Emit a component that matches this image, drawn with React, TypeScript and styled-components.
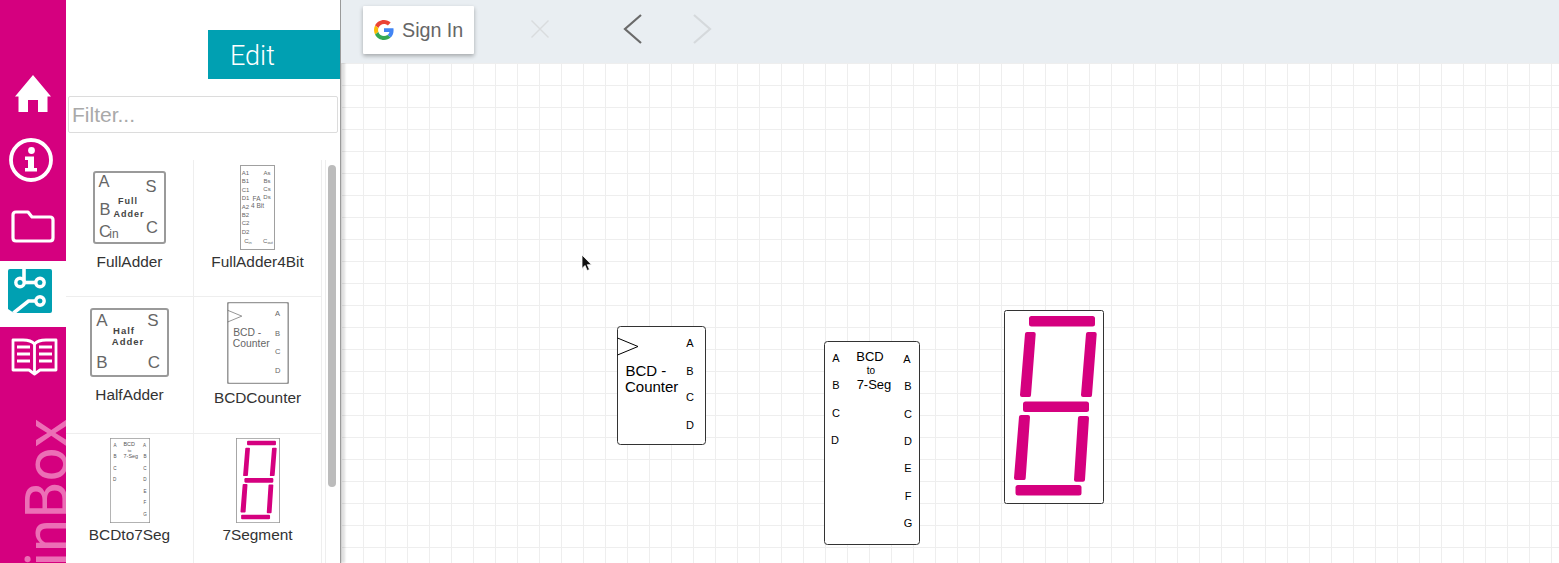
import React from "react";
import styled, { createGlobalStyle } from "styled-components";

const Global = createGlobalStyle`
  html, body { margin: 0; padding: 0; height: 100%; overflow: hidden; background: #fff; }
  #root { height: 100%; }
  * { box-sizing: border-box; }
`;

const PINK = "#d5007f";
const TEAL = "#00a0b2";

const Page = styled.div`
  display: flex;
  width: 1559px;
  height: 563px;
  overflow: hidden;
  font-family: "Liberation Sans", Arial, sans-serif;
`;

const Rail = styled.nav`
  width: 66px;
  flex: none;
  display: flex;
  flex-direction: column;
  background: ${PINK};
  overflow: hidden;
`;

const RailTop = styled.div`
  height: 261px;
  flex: none;
  padding-top: 61px;
  display: flex;
  flex-direction: column;
`;

const RailSlot = styled.div<{ $h: number; $pl?: number; $pr?: number }>`
  height: ${(p) => p.$h}px;
  flex: none;
  display: flex;
  align-items: center;
  justify-content: center;
  padding-left: ${(p) => p.$pl ?? 0}px;
  padding-right: ${(p) => p.$pr ?? 0}px;
`;

const ActiveSlot = styled.div`
  height: 66px;
  flex: none;
  background: #fff;
  display: flex;
  align-items: center;
  justify-content: center;
  padding: 0 6px 6px 0;
`;

const Brand = styled.div`
  writing-mode: vertical-rl;
  transform: rotate(180deg);
  align-self: flex-start;
  font-family: "Roboto", sans-serif;
  font-weight: 400;
  font-size: 60px;
  line-height: 66px;
  color: #ec6fb6;
  white-space: nowrap;
  margin-top: 31px;
  margin-left: 14px;
  height: 190px;
  text-align: left;
`;

const Library = styled.aside`
  width: 275px;
  flex: none;
  background: #fff;
  display: flex;
  flex-direction: column;
  border-right: 1px solid #9a9a9a;
  box-shadow: 4px 0 2px rgba(0, 0, 0, 0.12);
  z-index: 2;
`;

const EditRow = styled.div`
  height: 96px;
  flex: none;
  padding-top: 30px;
  display: flex;
  justify-content: flex-end;
`;

const EditButton = styled.button`
  width: 132px;
  height: 49px;
  border: 0;
  background: ${TEAL};
  color: #fff;
  font-family: "Roboto", sans-serif;
  font-weight: 300;
  font-size: 27px;
  text-align: left;
  padding: 3px 0 0 22px;
`;

const Filter = styled.input`
  display: block;
  flex: none;
  width: 270px;
  height: 37px;
  margin-left: 2px;
  border: 1px solid #dcdcdc;
  border-radius: 2px;
  padding: 0 3px;
  outline: 0;
  font-family: "Liberation Sans", Arial, sans-serif;
  font-size: 21px;
  color: #333;
  &::placeholder { color: #a9a9a9; opacity: 1; }
`;

const ListArea = styled.div`
  display: flex;
  flex: 1;
  min-height: 0;
  margin-top: 27px;
`;

const Grid = styled.div`
  width: 256px;
  flex: none;
  display: grid;
  grid-template-columns: 128px 128px;
  grid-template-rows: 137px 137px 1fr;
  border-right: 1px solid #eeeeee;
`;

const Cell = styled.div<{ $pad: number; $gap: number; $right?: boolean; $last?: boolean }>`
  display: flex;
  flex-direction: column;
  align-items: center;
  padding-top: ${(p) => p.$pad}px;
  padding-right: ${(p) => (p.$right ? 1 : 0)}px;
  gap: ${(p) => p.$gap}px;
  border-right: ${(p) => (p.$right ? "0" : "1px solid #eeeeee")};
  border-bottom: ${(p) => (p.$last ? "0" : "1px solid #eeeeee")};
`;

const Label = styled.div`
  font-size: 15.4px;
  line-height: 17px;
  color: #333;
  white-space: nowrap;
`;

const ScrollTrack = styled.div`
  width: 15px;
  flex: none;
  border-left: 1px solid #eeeeee;
  margin-left: 3px;
  padding: 5px 0 0 2px;
`;

const ScrollThumb = styled.div`
  width: 8px;
  height: 322px;
  border-radius: 4px;
  background: #bcbcbc;
`;

const Main = styled.main`
  flex: 1;
  display: flex;
  flex-direction: column;
  min-width: 0;
`;

const Toolbar = styled.header`
  position: relative;
  z-index: 3;
  height: 63px;
  flex: none;
  background: #e9eef2;
  display: flex;
  align-items: flex-start;
  padding: 6px 0 0 22px;
`;

const SignIn = styled.button`
  width: 111px;
  height: 48px;
  flex: none;
  border: 0;
  background: #fff;
  border-radius: 1px;
  box-shadow: 0 2px 4px rgba(0, 0, 0, 0.3);
  display: flex;
  align-items: center;
  gap: 8px;
  padding: 0 0 0 11px;
  font-family: "Liberation Sans", Arial, sans-serif;
  font-size: 19.7px;
  color: #666;
`;

const ToolIcon = styled.svg<{ $ml: number; $mt: number }>`
  flex: none;
  margin-left: ${(p) => p.$ml}px;
  margin-top: ${(p) => p.$mt}px;
`;

const Canvas = styled.div`
  position: relative;
  flex: 1;
  background-color: #fff;
  background-image:
    linear-gradient(to right, #eeeeee 1px, transparent 1px),
    linear-gradient(to bottom, #eeeeee 1px, transparent 1px);
  background-size: 22px 22px;
  background-position: 22px 22px;
`;

const Node = styled.svg<{ $x: number; $y: number }>`
  position: absolute;
  left: ${(p) => p.$x}px;
  top: ${(p) => p.$y}px;
  overflow: visible;
`;

const Cursor = styled.svg`
  position: absolute;
  left: 240px;
  top: 191px;
`;

const Thumb = styled.svg`
  display: block;
  flex: none;
`;

const T: React.FC<{ x: number; y: number; s: number; c?: string; w?: number; a?: "middle" | "start" | "end"; ls?: number; children: React.ReactNode }> = ({ x, y, s, c = "#000", w, a = "middle", ls, children }) => (
  <text x={x} y={y} fontSize={s} fill={c} fontWeight={w} textAnchor={a} letterSpacing={ls} fontFamily='"Liberation Sans", Arial, sans-serif'>
    {children}
  </text>
);

type ArtProps = { stroke: string; ink: string; sw: number };

const CounterArt: React.FC<ArtProps> = ({ stroke, ink, sw }) => (
  <>
    <rect x={0.5} y={0.5} width={88} height={118} rx={3} fill="#fff" stroke={stroke} strokeWidth={sw} />
    <path d="M0.5 12 L21 20.5 L0.5 29" fill="none" stroke={ink} strokeWidth={1} />
    <T x={8.5} y={50} s={15} c={ink} a="start">BCD -</T>
    <T x={8} y={66} s={15} c={ink} a="start">Counter</T>
    <T x={73} y={21} s={11} c={ink}>A</T>
    <T x={73} y={49} s={11} c={ink}>B</T>
    <T x={73} y={75} s={11} c={ink}>C</T>
    <T x={73} y={103} s={11} c={ink}>D</T>
  </>
);

const DecoderArt: React.FC<ArtProps> = ({ stroke, ink, sw }) => (
  <>
    <rect x={0.5} y={0.5} width={95} height={203} rx={3} fill="#fff" stroke={stroke} strokeWidth={sw} />
    <T x={12} y={21} s={11} c={ink}>A</T>
    <T x={12} y={48} s={11} c={ink}>B</T>
    <T x={12} y={76} s={11} c={ink}>C</T>
    <T x={11} y={103} s={11} c={ink}>D</T>
    <T x={46} y={20} s={13} c={ink}>BCD</T>
    <T x={47} y={33} s={10} c={ink}>to</T>
    <T x={50} y={48} s={13} c={ink}>7-Seg</T>
    <T x={83} y={22} s={11} c={ink}>A</T>
    <T x={84} y={49} s={11} c={ink}>B</T>
    <T x={84} y={77} s={11} c={ink}>C</T>
    <T x={84} y={104} s={11} c={ink}>D</T>
    <T x={84} y={131} s={11} c={ink}>E</T>
    <T x={84} y={159} s={11} c={ink}>F</T>
    <T x={84} y={186} s={11} c={ink}>G</T>
  </>
);

const VSeg: React.FC<{ tl: number; tr: number; bl: number; br: number; y0: number; y1: number }> = ({ tl, tr, bl, br, y0, y1 }) => (
  <polygon
    points={`${tl + 2},${y0 + 2} ${tr - 2},${y0 + 2} ${br - 2},${y1 - 2} ${bl + 2},${y1 - 2}`}
    fill={PINK}
    stroke={PINK}
    strokeWidth={4}
    strokeLinejoin="round"
  />
);

const SegmentArt: React.FC<{ stroke: string; sw: number }> = ({ stroke, sw }) => (
  <>
    <rect x={0.5} y={0.5} width={99} height={193} rx={2} fill="#fff" stroke={stroke} strokeWidth={sw} />
    <g fill={PINK}>
      <rect x={25} y={6} width={66} height={10.5} rx={2.5} />
      <rect x={19} y={91.5} width={66} height={10.5} rx={2.5} />
      <rect x={11.5} y={175} width={66} height={10.5} rx={2.5} />
    </g>
    <VSeg tl={21} tr={31.7} bl={16} br={27} y0={22} y1={87} />
    <VSeg tl={82} tr={92.7} bl={77} br={88} y0={22} y1={87} />
    <VSeg tl={15} tr={26} bl={10} br={21.7} y0={105} y1={170} />
    <VSeg tl={74} tr={85} bl={70} br={81} y0={106} y1={171.7} />
  </>
);

const GREY = "#9a9a9a";
const INK = "#666";
const BOLD = "#444";

const FullAdderThumb = () => (
  <Thumb width={73} height={73} viewBox="0 0 73 73">
    <rect x={1} y={1} width={71} height={71} rx={2} fill="#fff" stroke={GREY} strokeWidth={2} />
    <T x={11} y={16} s={16.5} c={INK}>A</T>
    <T x={58} y={21} s={16.5} c={INK}>S</T>
    <T x={12} y={44} s={16.5} c={INK}>B</T>
    <T x={59} y={62} s={16.5} c={INK}>C</T>
    <T x={12} y={66} s={16.5} c={INK}>C</T>
    <T x={21} y={67} s={12} c={INK}>in</T>
    <T x={35} y={33} s={9} c={BOLD} w={700} ls={1}>Full</T>
    <T x={36} y={46} s={9} c={BOLD} w={700} ls={1}>Adder</T>
  </Thumb>
);

const FullAdder4Thumb = () => {
  const left = ["A1", "B1", "C1", "D1", "A2", "B2", "C2", "D2"];
  const right = ["As", "Bs", "Cs", "Ds"];
  return (
    <Thumb width={35} height={85} viewBox="0 0 35 85">
      <rect x={0.5} y={0.5} width={34} height={84} fill="#fff" stroke="#a0a0a0" strokeWidth={1} />
      {left.map((t, i) => (
        <T key={t} x={5.5} y={10 + i * 8.4} s={6} c={INK}>{t}</T>
      ))}
      {right.map((t, i) => (
        <T key={t} x={27} y={10 + i * 8} s={6} c={INK}>{t}</T>
      ))}
      <T x={16.5} y={36} s={6.5} c={INK}>FA</T>
      <T x={17.5} y={43} s={6.5} c={INK}>4 Bit</T>
      <T x={8} y={78} s={6} c={INK}>
        C<tspan fontSize={4} dy={1}>in</tspan>
      </T>
      <T x={28} y={78} s={6} c={INK}>
        C<tspan fontSize={4} dy={1}>out</tspan>
      </T>
    </Thumb>
  );
};

const HalfAdderThumb = () => (
  <Thumb width={79} height={69} viewBox="0 0 79 69">
    <rect x={1} y={1} width={77} height={67} rx={2} fill="#fff" stroke={GREY} strokeWidth={2} />
    <T x={12} y={18} s={17} c={INK}>A</T>
    <T x={63} y={18} s={17} c={INK}>S</T>
    <T x={12} y={60} s={17} c={INK}>B</T>
    <T x={64} y={60} s={17} c={INK}>C</T>
    <T x={34} y={26} s={9.5} c={BOLD} w={700} ls={1}>Half</T>
    <T x={38} y={37} s={9.5} c={BOLD} w={700} ls={1}>Adder</T>
  </Thumb>
);

const CounterThumb = () => (
  <Thumb width={62} height={82} viewBox="0 0 89 119">
    <CounterArt stroke="#999" ink="#666" sw={2.5} />
  </Thumb>
);

const DecoderThumb = () => (
  <Thumb width={40} height={85} viewBox="0 0 96 204">
    <DecoderArt stroke="#999" ink="#555" sw={2.5} />
  </Thumb>
);

const SegmentThumb = () => (
  <Thumb width={44} height={85} viewBox="0 0 100 194">
    <SegmentArt stroke="#999" sw={2.5} />
  </Thumb>
);

export default function App() {
  return (
    <Page>
      <Global />
      <Rail>
        <RailTop>
          <RailSlot $h={66}>
            <svg width={38} height={38} viewBox="0 0 38 38">
              <path fill="#fff" d="M19 0 L37 21.5 H33.5 V37 H24 V25 H14 V37 H4.5 V21.5 H1 Z" />
            </svg>
          </RailSlot>
          <RailSlot $h={66} $pr={5}>
            <svg width={44} height={44} viewBox="0 0 44 44">
              <circle cx={22} cy={22} r={20} fill="none" stroke="#fff" strokeWidth={3.8} />
              <circle cx={22.5} cy={12.5} r={3.4} fill="#fff" />
              <path fill="#fff" d="M16 18.5 h9 V30 h3 v3.5 H16 V30 h3 v-8 h-3 Z" />
            </svg>
          </RailSlot>
          <RailSlot $h={66}>
            <svg width={44} height={33} viewBox="0 0 44 33">
              <path fill="none" stroke="#fff" strokeWidth={3.2} strokeLinejoin="round" d="M2 5 q0 -3 3 -3 H17 L21 7 H39 q3 0 3 3 V28 q0 3 -3 3 H5 q-3 0 -3 -3 Z" />
            </svg>
          </RailSlot>
        </RailTop>
        <ActiveSlot>
          <svg width={44} height={44} viewBox="0 0 44 44">
            <path d="M2 0 H42 Q44 0 44 2 V42 Q44 44 42 44 H6 L0 40 V2 Q0 0 2 0 Z" fill={TEAL} />
            <g fill="none" stroke="#fff" strokeWidth={3.6}>
              <path d="M16 0 V13.5" />
              <path d="M12 13.5 H32" />
              <path d="M32 32 H20.5 L5.5 44" />
            </g>
            <g fill={TEAL} stroke="#fff" strokeWidth={3.4}>
              <circle cx={12} cy={13.5} r={4.2} />
              <circle cx={32} cy={13.5} r={4.2} />
              <circle cx={32} cy={32} r={4.2} />
            </g>
          </svg>
        </ActiveSlot>
        <RailSlot $h={60} $pl={3}>
          <svg width={47} height={38} viewBox="0 0 47 38">
            <path fill="none" stroke="#fff" strokeWidth={2.8} strokeLinejoin="round" d="M23.5 6 Q20 2 12 2 H2 V32 H18 L23.5 36 L29 32 H45 V2 H35 Q27 2 23.5 6 Z M23.5 6 V34" />
            <path fill="none" stroke="#fff" strokeWidth={3} d="M6 9 H19 M6 16 H19 M6 23 H19 M28 9 H41 M28 16 H41 M28 23 H41" />
          </svg>
        </RailSlot>
        <Brand>inBox</Brand>
      </Rail>

      <Library>
        <EditRow>
          <EditButton>Edit</EditButton>
        </EditRow>
        <Filter placeholder="Filter..." />
        <ListArea>
          <Grid>
            <Cell $pad={11} $gap={9}>
              <FullAdderThumb />
              <Label>FullAdder</Label>
            </Cell>
            <Cell $pad={5} $gap={3} $right>
              <FullAdder4Thumb />
              <Label>FullAdder4Bit</Label>
            </Cell>
            <Cell $pad={11} $gap={9}>
              <HalfAdderThumb />
              <Label>HalfAdder</Label>
            </Cell>
            <Cell $pad={5} $gap={5} $right>
              <CounterThumb />
              <Label>BCDCounter</Label>
            </Cell>
            <Cell $pad={4} $gap={3} $last>
              <DecoderThumb />
              <Label>BCDto7Seg</Label>
            </Cell>
            <Cell $pad={4} $gap={3} $right $last>
              <SegmentThumb />
              <Label>7Segment</Label>
            </Cell>
          </Grid>
          <ScrollTrack>
            <ScrollThumb />
          </ScrollTrack>
        </ListArea>
      </Library>

      <Main>
        <Toolbar>
          <SignIn>
            <svg width={20} height={20} viewBox="0 0 48 48">
              <path fill="#EA4335" d="M24 9.5c3.54 0 6.71 1.22 9.21 3.6l6.85-6.85C35.9 2.38 30.47 0 24 0 14.62 0 6.51 5.38 2.56 13.22l7.98 6.19C12.43 13.72 17.74 9.5 24 9.5z" />
              <path fill="#4285F4" d="M46.98 24.55c0-1.57-.15-3.09-.38-4.55H24v9.02h12.94c-.58 2.96-2.26 5.48-4.78 7.18l7.73 6c4.51-4.18 7.09-10.36 7.09-17.65z" />
              <path fill="#FBBC05" d="M10.53 28.59c-.48-1.45-.76-2.99-.76-4.59s.27-3.14.76-4.59l-7.98-6.19C.92 16.46 0 20.12 0 24c0 3.88.92 7.54 2.56 10.78l7.97-6.19z" />
              <path fill="#34A853" d="M24 48c6.48 0 11.93-2.13 15.89-5.81l-7.73-6c-2.15 1.45-4.92 2.3-8.16 2.3-6.26 0-11.57-4.22-13.47-9.91l-7.98 6.19C6.51 42.62 14.62 48 24 48z" />
            </svg>
            Sign In
          </SignIn>
          <ToolIcon $ml={57} $mt={14} width={18} height={18} viewBox="0 0 18 18">
            <path d="M0.5 0.5 L17.5 17.5 M17.5 0.5 L0.5 17.5" stroke="#d9dcde" strokeWidth={1.4} fill="none" />
          </ToolIcon>
          <ToolIcon $ml={74} $mt={8} width={19} height={30} viewBox="0 0 19 30">
            <path d="M18 1 L2 15 L18 29" stroke="#6a6a6a" strokeWidth={2.2} fill="none" />
          </ToolIcon>
          <ToolIcon $ml={51} $mt={8} width={19} height={30} viewBox="0 0 19 30">
            <path d="M1 1 L17 15 L1 29" stroke="#d5d9dc" strokeWidth={2.2} fill="none" />
          </ToolIcon>
        </Toolbar>
        <Canvas>
          <Cursor width={12} height={18} viewBox="0 0 12 18">
            <path d="M1 1 V14.5 L4 11.5 L6.2 16.5 L8.5 15.5 L6.3 10.7 H10.5 Z" fill="#111" stroke="#fff" strokeWidth={0.8} />
          </Cursor>
          <Node $x={276} $y={263} width={89} height={119} viewBox="0 0 89 119">
            <CounterArt stroke="#333" ink="#000" sw={1} />
          </Node>
          <Node $x={483} $y={278} width={96} height={204} viewBox="0 0 96 204">
            <DecoderArt stroke="#333" ink="#000" sw={1} />
          </Node>
          <Node $x={663} $y={247} width={100} height={194} viewBox="0 0 100 194">
            <SegmentArt stroke="#333" sw={1} />
          </Node>
        </Canvas>
      </Main>
    </Page>
  );
}
